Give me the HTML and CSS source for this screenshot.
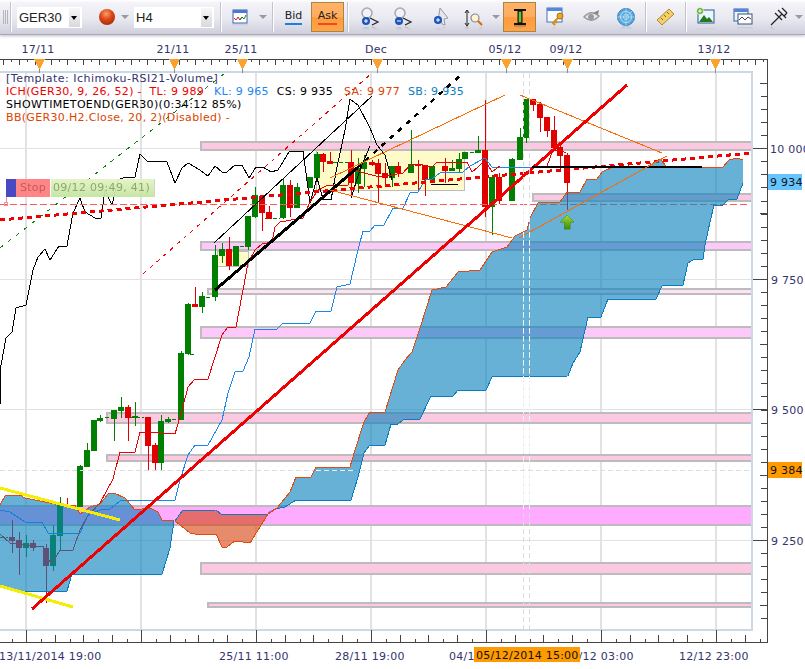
FILE: index.html
```html
<!DOCTYPE html>
<html lang="en">
<head>
    <meta charset="UTF-8">
    <title>GER30 H4</title>
    <link rel="stylesheet" href="styles.css">
</head>
<body>
    <div class="toolbar">
        <div class="grip"></div>
        <div class="sep sep-first"></div>
        <div class="combo combo-symbol"><span>GER30</span><b class="combo-btn"></b></div>
        <div class="tool tool-ball m10"><i class="ball"></i></div>
        <i class="caret"></i>
        <div class="combo combo-period m5"><span>H4</span><b class="combo-btn"></b></div>
        <div class="sep m6"></div>
        <div class="tool tool-narrow m3">
            <svg width="16" height="16" viewBox="0 0 16 16"><rect x="1" y="1" width="14" height="13" fill="#fff" stroke="#3f63b0"/><rect x="1" y="1" width="14" height="3" fill="#4a7ad0"/><path d="M2 9l2 2 2-3 2 3 2-3" fill="none" stroke="#d02020"/><path d="M8 11l2-3 2 2 2-4" fill="none" stroke="#208020"/></svg>
        </div>
        <i class="caret m4"></i>
        <div class="sep m5"></div>
        <div class="tool m3"><span class="price price-bid">Bid</span></div>
        <div class="tool tool-on m1"><span class="price price-ask">Ask</span></div>
        <div class="sep m3"></div>
        <div class="tool m4">
            <svg width="20" height="20" viewBox="0 0 20 20"><circle cx="7" cy="6" r="5" fill="#f2f2f6" stroke="#a8a8b0" stroke-width="1.5"/><path d="M10 11l8 4-6 3" fill="none" stroke="#222" stroke-width="1.2"/><circle cx="6" cy="14" r="4" fill="#1c55b8"/><path d="M4 14h4M6 12v4" stroke="#fff"/></svg>
        </div>
        <div class="tool">
            <svg width="20" height="20" viewBox="0 0 20 20"><circle cx="7" cy="6" r="5" fill="#f2f2f6" stroke="#a8a8b0" stroke-width="1.5"/><path d="M10 11l8 4-6 3" fill="none" stroke="#222" stroke-width="1.2"/><circle cx="6" cy="14" r="4" fill="#1c55b8"/><path d="M4 14h4" stroke="#fff"/></svg>
        </div>
        <div class="tool m5">
            <svg width="20" height="20" viewBox="0 0 20 20"><path d="M9 1l8 10-4 1 1 6-3-1-1-5-3 2z" fill="#e6e6ec" stroke="#9a9aa4"/><circle cx="7" cy="13" r="4" fill="#1c55b8"/><path d="M5 13h4M7 11v4" stroke="#fff"/></svg>
        </div>
        <div class="tool">
            <svg width="20" height="20" viewBox="0 0 20 20"><path d="M3 4v14M1 6l2-3 2 3M1 16l2 3 2-3" fill="none" stroke="#222"/><circle cx="11" cy="11" r="4" fill="#fff3d0" stroke="#8a8a90" stroke-width="1.2"/><path d="M14 14l4 4" stroke="#d06a10" stroke-width="2"/></svg>
        </div>
        <i class="caret m2"></i>
        <div class="tool tool-on m3">
            <svg width="18" height="18" viewBox="0 0 18 18"><path d="M3 2h12M3 16h12" stroke="#111" stroke-width="2"/><path d="M7 3h4v12H7z" fill="#2f8a20" stroke="#111"/><path d="M9 4v10" stroke="#b6ee60"/></svg>
        </div>
        <div class="tool m3">
            <svg width="20" height="20" viewBox="0 0 20 20"><rect x="1" y="1" width="15" height="14" fill="#fafcff" stroke="#4a6fb8"/><rect x="1" y="1" width="15" height="3" fill="#5585d8"/><circle cx="14" cy="9" r="3" fill="#e8a820" stroke="#a87010"/><path d="M12 11l-5 5 2 2M9 14l2 2" fill="none" stroke="#d09018" stroke-width="2"/></svg>
        </div>
        <div class="tool m3">
            <svg width="20" height="20" viewBox="0 0 20 20"><path d="M2 10q7-8 15-1-7 8-15 1z" fill="#e8e8ea" stroke="#989898" stroke-width="1.5"/><circle cx="9" cy="10" r="3" fill="#9a9a9a"/><path d="M11 6l6-3-1 5" fill="#888"/></svg>
        </div>
        <div class="tool m1">
            <svg width="20" height="20" viewBox="0 0 20 20"><circle cx="10" cy="10" r="8.5" fill="#5aa8dc" stroke="#3a7eb8"/><circle cx="10" cy="10" r="5.5" fill="none" stroke="#b8e0f6"/><circle cx="10" cy="10" r="2.5" fill="none" stroke="#b8e0f6"/><path d="M10 10l6-6M10 1v18M1 10h18" stroke="#b8e0f6" stroke-width=".7"/></svg>
        </div>
        <div class="sep m3"></div>
        <div class="tool m2">
            <svg width="20" height="20" viewBox="0 0 20 20"><path d="M1 13L13 2l5 5L6 18z" fill="#f2cf6a" stroke="#b08a28"/><path d="M5 11l2 2M8 8l2 2M11 5l2 2" stroke="#8a6a18"/></svg>
        </div>
        <div class="sep m3"></div>
        <div class="tool m2">
            <svg width="20" height="20" viewBox="0 0 20 20"><rect x="2" y="3" width="16" height="13" fill="#eaf6ff" stroke="#2a5a8a"/><path d="M3 15l5-7 3 4 2-2 4 5z" fill="#1f7a20"/><circle cx="4" cy="4" r="3.5" fill="#5aaa30" stroke="#fff" stroke-width=".7"/><path d="M2 4h4M4 2v4" stroke="#fff"/></svg>
        </div>
        <div class="tool m4">
            <svg width="20" height="20" viewBox="0 0 20 20"><rect x="1" y="2" width="14" height="12" fill="#eef4fb" stroke="#38609c"/><rect x="1" y="2" width="14" height="3" fill="#5585d8"/><rect x="5" y="7" width="14" height="10" fill="#fff" stroke="#38507c"/><path d="M6 13l3-3 3 3 3-3 3 2" fill="none" stroke="#444"/></svg>
        </div>
        <div class="tool m3">
            <svg width="20" height="20" viewBox="0 0 20 20"><path d="M2 18L13 7M9 3l8 8M13 1l5 5M6 6l7 7M15 9l3-3" fill="none" stroke="#222" stroke-width="1.2"/></svg>
        </div>
        <i class="caret"></i>
    </div>

    <div class="chart">
        <svg class="plot" width="805" height="634" viewBox="0 35 805 634">
            <defs>
                <linearGradient id="arrowFill" x1="0" y1="0" x2="0" y2="1"><stop offset="0" stop-color="#a6dc30"/><stop offset="1" stop-color="#3f8a10"/></linearGradient>
            </defs>

            <!-- grid and zones -->
            <path class="grid" d="M26 73V630M141 73V630M256 73V630M371 73V630M486 73V630M601 73V630M716 73V630"/>
            <path class="grid-h" d="M0 148H752M0 279H752M0 409H752M0 540H752"/>
            <rect class="zone zone-rose" x="201" y="142" width="551" height="8"/>
            <rect class="zone zone-rose" x="533" y="194" width="219" height="7"/>
            <rect class="zone zone-lilac" x="201" y="242" width="551" height="8"/>
            <rect class="zone zone-pale" x="208" y="289" width="544" height="5"/>
            <rect class="zone zone-lilac" x="201" y="327" width="551" height="11"/>
            <rect class="zone zone-rose" x="107" y="413" width="645" height="10"/>
            <rect class="zone zone-rose" x="107" y="455" width="645" height="6"/>
            <rect class="zone zone-violet" x="-2" y="506" width="754" height="19"/>
            <rect class="zone zone-rose" x="201" y="563" width="551" height="11"/>
            <rect class="zone zone-rose" x="208" y="603" width="544" height="4"/>
            <rect class="zone-box" x="217" y="251" width="31" height="15"/>
            <rect class="zone-box" x="316" y="150" width="148" height="40"/>

            <!-- candles -->
            <path class="wick up" d="M26 535V557M53 525V571M60 497V550M80 465V507M87 443V467M100 415V422M114 410V441M121 397V418M135 402V426M161 415V470M168 417V423M181 351V420M188 303V355M202 292V313M215 245V301M222 243V263M248 216V250M255 187V218M283 178V219M297 183V208M310 177V188M317 152V178M358 158V193M364 155V187M392 166V187M411 130V173M432 166V182M452 160V171M459 153V172M478 136V153M492 175V235M512 158V201M520 128V160M526 99V143"/>
            <path class="wick down" d="M12 520V553M19 532V575M33 540V551M46 544V603M67 498V505M128 405V441M148 417V470M155 443V470M195 287V307M229 237V270M262 196V231M269 206V219M290 180V217M323 153V172M330 152V164M351 150V197M372 160V166M378 159V203M385 163V187M398 162V177M418 160V192M425 165V196M445 158V183M485 100V217M499 173V204M533 99V111M540 102V132M547 117V137M554 116V148M560 145V172M567 153V210"/>
            <path class="doji" d="M105 417H111M130 417H144M172 419H178M206 297H212M240 246H245M240 265H246M265 218H270M273 218H280M333 162H348M470 152H478M0 537H8M190 354H194"/>
            <path class="body up" d="M26 543V548M53 535V566M60 505V536M80 466V507M87 450V467M94 420V451M100 418V421M114 410V419M121 407V411M135 416V418M161 421V463M168 419V422M181 353V420M188 304V354M202 296V307M215 255V297M222 249V256M236 246V266M248 216V247M255 195V217M283 185V218M297 187V208M310 177V188M317 154V178M358 168V184M364 162V169M392 166V178M411 164V173M432 166V180M452 168V171M459 159V169M465 152V159M478 150V153M492 177V207M512 159V201M520 137V160M526 99V138"/>
            <path class="body down" d="M12 537V541M19 540V548M33 543V548M46 548V566M128 407V418M148 417V446M155 445V463M195 304V307M229 249V266M262 196V213M269 212V219M290 185V208M323 154V162M330 161V164M351 162V183M372 162V165M378 163V174M385 173V178M398 166V173M418 164V166M425 165V180M445 166V171M485 150V207M499 177V201M533 99V105M540 104V118M547 117V131M554 130V148M560 147V156M567 155V183"/>

            <!-- ichimoku lines -->
            <polyline class="chikou" points="0,405 1,365 6,338 12,332 16,308 26,305 33,270 38,257 45,249 50,260 59,246 67,246 73,213 80,198 85,212 95,218 101,218 105,190 112,205 118,180 125,177 135,177 140,154 147,161 167,162 175,183 182,168 188,163 200,170 208,176 215,166 222,172 227,172 235,165 242,165 249,178 256,167 263,167 271,172 278,170 289,152 303,151 310,203 317,178 323,199 331,200 337,167 345,130 350,99 358,105 370,128 377,145 385,155 392,180"/>
            <polyline class="chikou" points="351,198 360,170 370,146"/>
            <polyline class="kijun" points="0,510 10,512 25,522 42,522 48,533 80,533 88,515 100,510 110,509 120,501 175,500 180,480 188,455 195,445 208,445 222,420 228,393 235,372 243,371 249,357 255,329 277,329 283,323 310,323 316,311 331,311 337,287 350,284 358,250 363,231 370,231 375,225 384,225 393,208 403,208 410,193 418,192 425,180 432,179 440,173 463,172 470,166 485,158 492,167 533,167"/>
            <polyline class="tenkan" points="0,534 10,543 33,546 43,546 46,560 53,562 60,550 73,550 80,530 87,517 100,503 113,479 120,452 135,452 140,432 175,434 182,410 188,387 195,379 208,379 222,335 228,327 236,327 243,290 248,263 255,250 262,244 272,242 275,227 280,222 303,218 310,202 318,190 328,185 348,185 353,170 380,177 403,173 410,165 418,164 432,167 437,162 467,162 472,172 478,167 485,160 492,172 500,166"/>
            <polyline class="tenkan" points="547,166 553,150 560,150 566,153"/>

            <!-- trend lines -->
            <path class="dash-red" d="M0 204H748"/>
            <path class="dash-grey" d="M0 470H752"/>
            <path class="dash-green" d="M0 248L225 73"/>
            <path class="dash-red-fine" d="M143 274L372 73"/>
            <path class="dots-red" d="M0 220L752 153"/>
            <path class="line-black" d="M215 290L357 168"/>
            <path class="dash-black" d="M357 168L462 74"/>
            <path class="line-thin" d="M214 243L372 96"/>
            <path class="line-short" d="M431 184H458"/>
            <path class="orange" d="M330 178L505 95M330 190L512 238M520 95L662 153M519 238L667 156"/>

            <!-- cloud -->
            <path class="cloud" d="M0 505L5 496 20 495 25 498 60 505 75 505 80 514 90 507 100 504 108 494 114 493 125 498 135 510 150 508 158 512 162 520 174 521 170 548 162 574 72 574 67 591 15 591 0 586Z"/>
            <path class="cloud cloud-twist" d="M175 521L182 511 216 510 222 515 265 515 268 514 250 543 235 541 227 547 222 547 216 534 195 534 190 533Z"/>
            <path class="cloud" d="M268 514L277 508 290 492 296 477 311 477 316 467 350 467 355 450 364 422 370 412 385 412 398 370 405 360 412 352 420 328 432 290 446 287 458 272 480 270 492 252 507 247 515 236 527 230 530 218 538 203 560 202 567 192 580 192 587 179 597 179 602 172 613 167 647 167 660 159 667 167 723 167 729 160 737 158 743 160 743 183 737 199 729 199 723 205 714 205 710 222 705 245 703 259 693 260 688 263 683 285 662 286 656 299 608 299 601 317 588 317 580 352 573 363 568 376 492 377 486 390 458 390 453 396 431 396 420 419 403 420 398 424 391 424 385 445 370 445 364 453 358 477 351 500 296 500 285 507 275 509 268 512Z"/>
            <polyline class="span-a" points="0,505 5,496 20,495 25,498 60,505 75,505 80,514 90,507 100,504 108,494 114,493 125,498 135,510 150,508 158,512 162,520 174,521"/>
            <polyline class="span-b" points="174,521 170,548 162,574 72,574 67,591 15,591 0,586"/>
            <polyline class="span-b" points="175,521 182,511 216,510 222,515 268,514 275,509 285,507 296,500 351,500 358,477 364,453 370,445 385,445 391,424 398,424 403,420 420,419 431,396 453,396 458,390 486,390 492,377 568,376 573,363 580,352 588,317 601,317 608,299 656,299 662,286 683,285 688,263 693,260 703,259 705,245 710,222 714,205 723,205 729,199 737,199 743,183"/>
            <polyline class="span-a" points="175,521 190,533 195,534 216,534 222,547 227,547 235,541 250,543 268,514 277,508 290,492 296,477 311,477 316,467 350,467 355,450 364,422 370,412 385,412 398,370 405,360 412,352 420,328 432,290 446,287 458,272 480,270 492,252 507,247 515,236 527,230 530,218 538,203 560,202 567,192 580,192 587,179 597,179 602,172 613,167 647,167 660,159 667,167 723,167 729,160 737,158 743,160"/>

            <!-- over the cloud -->
            <path class="yellow" d="M0 488L120 520M0 586L73 607"/>
            <path class="line-red" d="M32 609L627 85"/>
            <path class="line-heavy" d="M532 167H702"/>
            <path class="orange" d="M519 238L667 156"/>
            <path class="dash-sel" d="M523 73V630M529 73V630"/>
            <path class="dash-white" d="M523 200V510M529 200V510M316 470H355"/>
            <path class="pin" d="M6 197V202"/>
            <circle class="pin" cx="6" cy="204" r="2"/>
            <polygon class="arrow" points="567,215 574,222 570,222 570,229 564,229 564,222 560,222"/>

            <!-- frame and axes -->
            <path class="frame" d="M0 72H752V630H0"/>
            <path class="axis" d="M0 59H767V642H0M256 630V642M141 630V642M26 630V642M371 630V642M486 630V642M601 630V642M716 630V642M753 148H767M753 279H767M753 409H767M753 540H767M760 83H767M760 213H767M760 344H767M760 475H767M760 605H767"/>
            <path class="axis-ticks top-long" d="M3 62H767"/>
            <path class="axis-ticks top-short" d="M11 60.5H767"/>
            <path class="axis-ticks right" d="M764 83V632"/>
            <path class="axis-ticks bottom-long" d="M-3 638.5H767"/>
            <path class="axis-ticks bottom-short" d="M12 640.5H767"/>
            <path class="marker-stem" d="M39 66V73M174 66V73M242 66V73M377 66V73M506 66V73M567 66V73M715 66V73"/>
            <path class="marker" d="M34 59h11l-5 10h-1zM169 59h11l-5 10h-1zM237 59h11l-5 10h-1zM372 59h11l-5 10h-1zM501 59h11l-5 10h-1zM562 59h11l-5 10h-1zM710 59h11l-5 10h-1z"/>

            <text class="label mid" x="38" y="53">17/11</text>
            <text class="label mid" x="173" y="53">21/11</text>
            <text class="label mid" x="241" y="53">25/11</text>
            <text class="label mid" x="376" y="53">Dec</text>
            <text class="label mid" x="505" y="53">05/12</text>
            <text class="label mid" x="566" y="53">09/12</text>
            <text class="label mid" x="714" y="53">13/12</text>

            <text class="label" x="770" y="153">10 000</text>
            <text class="label" x="771" y="284">9 750</text>
            <text class="label" x="771" y="414">9 500</text>
            <text class="label" x="771" y="545">9 250</text>
            <rect class="tag tag-blue" x="768" y="174" width="34" height="16"/>
            <text class="label label-dark" x="770" y="186">9 934</text>
            <rect class="tag tag-orange" x="768" y="462" width="34" height="16"/>
            <text class="label label-dark" x="770" y="474">9 384</text>

            <text class="label" x="-1" y="660">13/11/2014 19:00</text>
            <text class="label" x="219" y="660">25/11 11:00</text>
            <text class="label" x="335" y="660">28/11 19:00</text>
            <text class="label" x="449" y="660">04/12 11:00</text>
            <text class="label" x="564" y="660">08/12 03:00</text>
            <text class="label" x="679" y="660">12/12 23:00</text>
            <rect class="tag tag-orange" x="474" y="647" width="106" height="15"/>
            <text class="label label-dark" x="476" y="659">05/12/2014 15:00</text>
        </svg>

        <div class="legend">
            <div class="legend-title">[Template: Ichimoku-RSI21-Volume]</div>
            <div><span class="c-red">ICH(GER30, 9, 26, 52) -  TL: 9 989</span> <span class="c-blue">KL: 9 965</span> <span class="c-black">CS: 9 935</span> <span class="c-orange">SA: 9 977</span> <span class="c-sea">SB: 9 935</span></div>
            <div class="c-black">SHOWTIMETOEND(GER30)(0:34:12 85%)</div>
            <div class="c-orange">BB(GER30.H2.Close, 20, 2)(Disabled) -</div>
        </div>

        <div class="stop">
            <i class="stop-flag"></i>
            <span class="stop-name">Stop</span>
            <span class="stop-time">09/12 09:49, 41)</span>
        </div>
    </div>
</body>
</html>
```

FILE: styles.css
```css
html, body {
    margin: 0;
    padding: 0;
    background-color: #fff;
}
body {
    width: 805px;
    height: 669px;
    overflow: hidden;
    font-family: "DejaVu Sans", Verdana, sans-serif;
    font-size: 11px;
}

/* toolbar */
.toolbar {
    position: relative;
    z-index: 2;
    display: flex;
    align-items: center;
    height: 34px;
    border-bottom: 1px solid #a7a7b6;
    background: linear-gradient(#fff 0, #f3f3f8 3px, #e9e9f1 55%, #cfcfdd 100%);
    box-shadow: 0 1px 3px rgba(70, 70, 90, 0.35);
}
.grip {
    width: 6px;
    height: 14px;
    margin-left: 3px;
    background: repeating-linear-gradient(90deg, #b4b4c0 0, #b4b4c0 1px, transparent 1px, transparent 2px);
}
.sep {
    flex: none;
    width: 1px;
    height: 30px;
    background-color: #c3c3cf;
    border-right: 1px solid #fff;
}
.sep-first { margin-left: 1px; }
.m1 { margin-left: 1px; }
.m2 { margin-left: 2px; }
.m3 { margin-left: 3px; }
.m4 { margin-left: 4px; }
.m5 { margin-left: 5px; }
.m6 { margin-left: 6px; }
.m10 { margin-left: 10px; }

.combo {
    flex: none;
    display: flex;
    align-items: center;
    justify-content: space-between;
    height: 21px;
    padding: 0 2px;
    box-sizing: border-box;
    background-color: #fff;
    font-family: "Liberation Sans", Arial, sans-serif;
    font-size: 13px;
    color: #222;
}
.combo-symbol { width: 65px; margin-left: 5px; }
.combo-period { width: 80px; }
.combo-btn {
    width: 11px;
    height: 19px;
    background: linear-gradient(#f8f8f8, #d8d8de);
    position: relative;
}
.combo-btn::after {
    content: "";
    position: absolute;
    left: 2px;
    top: 8px;
    border: 3px solid transparent;
    border-top: 4px solid #000;
    border-bottom: 0;
}
.caret {
    flex: none;
    width: 0;
    height: 0;
    margin-right: 0;
    border: 4px solid transparent;
    border-top: 4px solid #9a9aa6;
    border-bottom: 0;
}
.tool {
    flex: none;
    display: flex;
    align-items: center;
    justify-content: center;
    width: 33px;
    height: 30px;
    box-sizing: border-box;
}
.tool svg {
    -webkit-box-reflect: below -2px linear-gradient(transparent 75%, rgba(255, 255, 255, 0.35));
}
.tool-ball { width: 29px; }
.tool-narrow { width: 30px; }
.tool-on {
    border: 1px solid #a98544;
    background: linear-gradient(#ffb266 0, #ffac60 50%, #ff9b3c 52%, #ffa448 100%);
}
.ball {
    width: 16px;
    height: 16px;
    border-radius: 50%;
    background: radial-gradient(circle at 45% 30%, #f8a070 0, #e04818 40%, #a02800 85%);
}
.price {
    font-size: 11px;
    color: #222;
    padding: 0 0 1px;
    border-bottom: 2px solid #1b7fe0;
}
.price-ask { border-bottom-color: #f04a1e; }

/* chart */
.chart {
    position: relative;
    height: 634px;
}
.plot {
    display: block;
    shape-rendering: crispEdges;
}
.grid { fill: none; stroke: #e2e2e2; stroke-width: 2; }
.grid-h { fill: none; stroke: #e2e2e2; stroke-width: 1; }
.zone { stroke: #bcbcbc; stroke-width: 1.5; }
.zone-rose { fill: #fcc8e2; }
.zone-lilac { fill: #fdc8fa; }
.zone-pale { fill: #fde2f8; }
.zone-violet { fill: #ffabff; }
.zone-box { fill: #fffbc8; stroke: #bcbcbc; }

.wick { fill: none; stroke-width: 1; }
.body { fill: none; stroke-width: 6; }
.up { stroke: #007f00; }
.down { stroke: #e00000; }
.doji { fill: none; stroke: #007f00; stroke-dasharray: 4 2; }

.chikou { fill: none; stroke: #000; stroke-width: 1; }
.kijun { fill: none; stroke: #1a86ee; stroke-width: 1; }
.tenkan { fill: none; stroke: #ee0000; stroke-width: 1; }

.dash-red { fill: none; stroke: #ff5a5a; stroke-dasharray: 7 3; }
.dash-grey { fill: none; stroke: #dcdcdc; stroke-dasharray: 5 3; }
.dash-sel { fill: none; stroke: #dcdcdc; stroke-dasharray: 5 3; }
.dash-white { fill: none; stroke: #f0f4f8; stroke-dasharray: 5 3; }
.dash-green { fill: none; stroke: #0a800a; stroke-dasharray: 4 6; }
.dash-red-fine { fill: none; stroke: #f00000; stroke-dasharray: 4 5; }
.dots-red { fill: none; stroke: #f00000; stroke-width: 3; stroke-dasharray: 5 4; }
.line-black { fill: none; stroke: #000; stroke-width: 3; }
.dash-black { fill: none; stroke: #000; stroke-width: 2.5; stroke-dasharray: 5 6; }
.line-thin { fill: none; stroke: #000; stroke-width: 1; }
.line-short { fill: none; stroke: #000; stroke-width: 1; }
.line-heavy { fill: none; stroke: #000; stroke-width: 2.5; }
.line-red { fill: none; stroke: #f00000; stroke-width: 3; }
.orange { fill: none; stroke: #ff6a00; stroke-width: 1; }
.yellow { fill: none; stroke: #f6ee00; stroke-width: 3; }

.cloud { fill: rgba(15, 130, 190, 0.63); }
.cloud-twist { fill: rgba(215, 70, 20, 0.62); }
.span-a { fill: none; stroke: #e24a10; stroke-width: 1; }
.span-b { fill: none; stroke: #0a7cc0; stroke-width: 1; }

.pin { fill: none; stroke: #f09090; }
.arrow { fill: url(#arrowFill); stroke: #3f8a10; stroke-width: 0.5; }

.frame { fill: none; stroke: #cbd8e6; stroke-width: 2; }
.axis { fill: none; stroke: #444; stroke-width: 1; }
.axis-ticks { fill: none; stroke: #444; }
.top-long { stroke-width: 6; stroke-dasharray: 1 15; }
.top-short { stroke-width: 3; stroke-dasharray: 1 15; }
.right { stroke-width: 6; stroke-dasharray: 1 12.06; }
.bottom-long { stroke-width: 7; stroke-dasharray: 1 27.75; }
.bottom-short { stroke-width: 3; stroke-dasharray: 1 27.75; }
.marker { fill: #f9a230; }
.marker-stem { fill: none; stroke: #8c8c8c; }

.label {
    font-size: 11px;
    letter-spacing: 0.25px;
    fill: #33336e;
    shape-rendering: auto;
}
.label.mid { text-anchor: middle; }
.label-dark { fill: #111; }
.tag-blue { fill: #66c4ff; }
.tag-orange { fill: #ff9a00; }

/* legend sits over the plot */
.legend {
    position: absolute;
    left: 6px;
    top: 37px;
    line-height: 13px;
    letter-spacing: 0.33px;
    color: #33336e;
}
.legend div { white-space: pre; }
.legend .legend-title { letter-spacing: 0.5px; }
.c-red { color: #f00000; }
.c-blue { color: #1a86ee; margin-left: 6px; }
.c-black { color: #000; margin-left: 4px; }
.c-orange { color: #dc4400; margin-left: 7px; }
.c-sea { color: #0a7cc0; margin-left: 4px; }
div.c-black, div.c-orange { margin-left: 0; }

.stop {
    position: absolute;
    left: 6px;
    top: 144px;
    display: flex;
    height: 18px;
    line-height: 18px;
    font-size: 11px;
    letter-spacing: 0.3px;
    opacity: 0.95;
}
.stop-flag { width: 10px; background-color: #4040c0; }
.stop-name {
    width: 35px;
    text-align: center;
    background-color: #ff8080;
    color: #c45050;
    border-right: 1px solid #fff;
    box-sizing: border-box;
}
.stop-time {
    width: 104px;
    padding-left: 2px;
    box-sizing: border-box;
    background: linear-gradient(#e4f4c4, #c4e4a0);
    color: #86a468;
    border-right: 1px solid #d0d0d0;
}
```
